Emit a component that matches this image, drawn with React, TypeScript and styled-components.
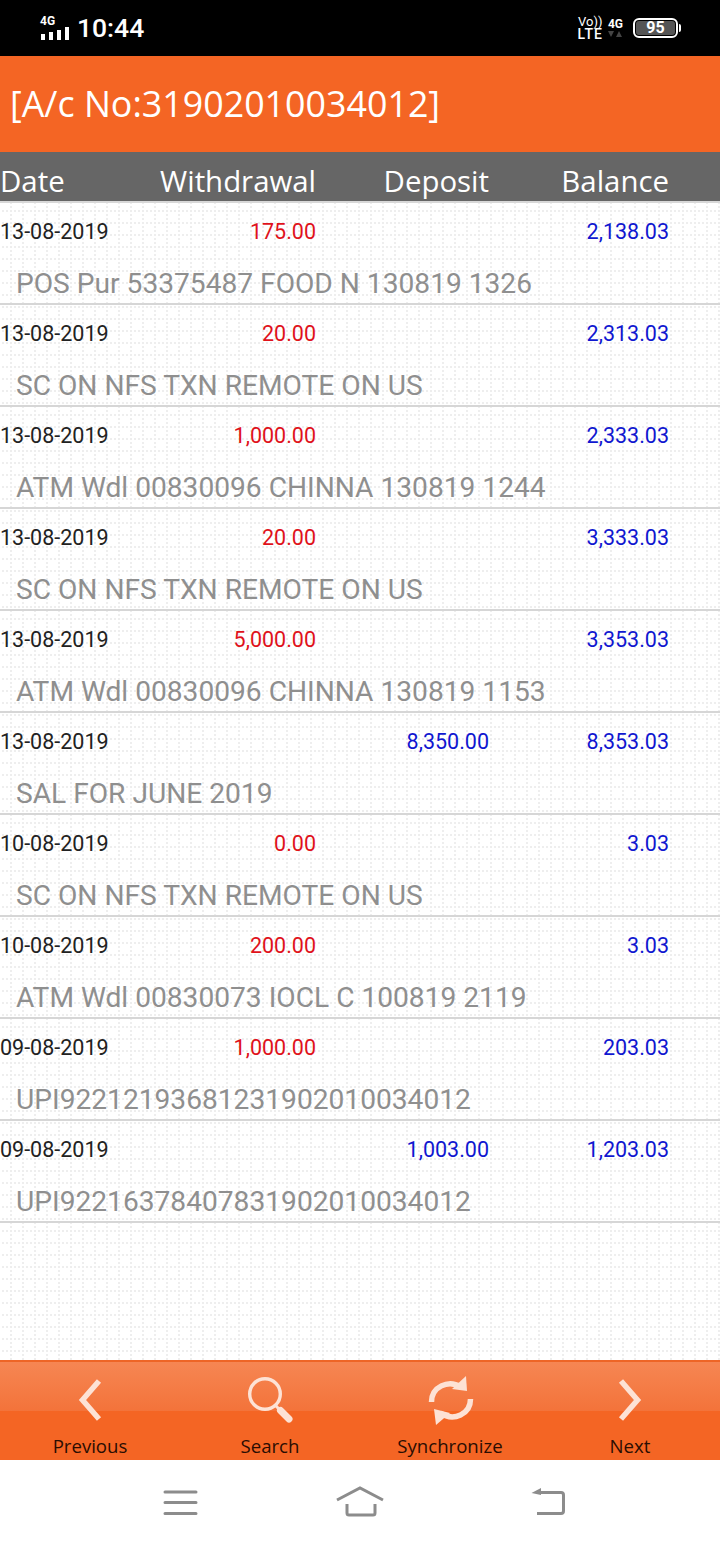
import React from "react";
import styled, { createGlobalStyle } from "styled-components";

const Global = createGlobalStyle`
  html, body { margin: 0; padding: 0; background: #fff; }
  * { box-sizing: border-box; }
`;
const Page = styled.div`
  width: 720px; height: 1544px; display: flex; flex-direction: column; overflow: hidden;
  font-family: Roboto, "Liberation Sans", sans-serif;
`;
const StatusBar = styled.div`
  height: 56px; background: #000; color: #fff; display: flex; justify-content: space-between;
  padding: 0 42px 0 40px; align-items: center; flex: none;
`;
const StatusLeft = styled.div`display: flex; align-items: center; gap: 7px;`;
const Time = styled.span`font-size: 26.5px; font-weight: 500; line-height: 1;`;
const SignalWrap = styled.div`display: flex; flex-direction: column; align-items: flex-start;`;
const TinyLabel = styled.span`font-size: 12px; font-weight: 700; line-height: 11px;`;
const StatusRight = styled.div`display: flex; align-items: center; gap: 5px;`;
const Stack = styled.div`display: flex; flex-direction: column; align-items: center;`;
const VoText = styled.span`font-size: 13px; line-height: 12px;`;
const LteText = styled.span`font-size: 14px; font-weight: 500; line-height: 13px; letter-spacing: 1px;`;
const Battery = styled.div`
  width: 45px; height: 20px; border: 2px solid #fff; border-radius: 6px; padding: 1px;
  display: flex; position: relative; margin-left: 5px;
  &::after { content: ""; position: absolute; right: -5px; top: 4px; width: 2px; height: 8px; background: #fff; border-radius: 0 2px 2px 0; }
`;
const BatteryFill = styled.div`
  flex: 1; background: #555; border-radius: 3px; color: #fff; font-size: 16px; font-weight: 700;
  line-height: 14px; text-align: center;
`;
const TitleBar = styled.div`
  height: 96px; background: #f46524; color: #fff; flex: none; display: flex; align-items: center;
  padding: 0 10px 2px; font-family: "Open Sans", sans-serif; font-size: 35.8px;
`;
const Grid = styled.div`
  display: grid; grid-template-columns: 120px 196px 173px 180px;
`;
const HeadRow = styled(Grid)`
  height: 51px; flex: none; background: #666; color: #fff; border-bottom: 2px solid #d8d8d8;
  font-family: "Open Sans", sans-serif; font-size: 29.4px; align-items: center; padding-top: 8px;
`;
const HeadCell = styled.div<{ $right?: boolean }>`
  text-align: ${(p) => (p.$right ? "right" : "left")}; line-height: 40px; white-space: nowrap;
`;
const Body = styled.div`
  flex: 1; background-color: #fff;
  background-image: url("data:image/svg+xml,%3Csvg xmlns='http://www.w3.org/2000/svg' width='12' height='12'%3E%3Cpath fill='%23eeeeee' d='M2 7h2v2H2zM6 7h2v2H6zM10 7h2v2h-2zM10 11h2v1h-2zM10 0h2v1h-2zM10 3h2v2h-2z'/%3E%3C/svg%3E");
  background-size: 12px 12px;
`;
const Row = styled.div`
  height: 102px; border-bottom: 2px solid #d6d6d6; display: flex; flex-direction: column;
`;
const Amounts = styled(Grid)`height: 55px; align-items: center; font-size: 21.5px; padding-top: 2px;`;
const DateCell = styled.div`color: #222; white-space: nowrap;`;
const Amount = styled.div<{ $color: string }>`color: ${(p) => p.$color}; text-align: right; white-space: nowrap;`;
const Narration = styled.div`
  padding: 8px 0 0 16px; color: #8f8f8f; font-size: 28.15px; line-height: 35px; white-space: nowrap;
`;
const Toolbar = styled.div`
  height: 100px; flex: none; position: relative; display: grid; grid-template-columns: repeat(4, 180px);
  background: #f46524; border-top: 2px solid #ee6526;
  &::before {
    content: ""; position: absolute; left: 0; right: 0; top: 0; height: 49px;
    background: linear-gradient(#f68653, #f3733a);
  }
`;
const ToolItem = styled.div`
  position: relative; display: flex; flex-direction: column; align-items: center; color: #2a0d02;
  font-family: "Open Sans", sans-serif; font-size: 18.6px; padding-top: 12px;
`;
const ToolIcon = styled.svg`width: 52px; height: 52px; fill: none; stroke: #fde2d5; display: block; overflow: visible;`;
const ToolLabel = styled.span`line-height: 22px; margin-top: 9px;`;
const NavBar = styled.div`
  height: 84px; flex: none; background: #fff; display: grid; grid-template-columns: repeat(3, 180px); justify-content: center;
  align-items: center;
`;
const NavIcon = styled.svg`width: 50px; height: 40px; fill: none; stroke: #8c8c8c; stroke-width: 3; margin: 0 auto; display: block; overflow: visible;`;

const rows = [
  ["13-08-2019", "175.00", "", "2,138.03", "POS Pur 53375487 FOOD N 130819 1326"],
  ["13-08-2019", "20.00", "", "2,313.03", "SC ON NFS TXN REMOTE ON US"],
  ["13-08-2019", "1,000.00", "", "2,333.03", "ATM Wdl 00830096 CHINNA 130819 1244"],
  ["13-08-2019", "20.00", "", "3,333.03", "SC ON NFS TXN REMOTE ON US"],
  ["13-08-2019", "5,000.00", "", "3,353.03", "ATM Wdl 00830096 CHINNA 130819 1153"],
  ["13-08-2019", "", "8,350.00", "8,353.03", "SAL FOR JUNE 2019"],
  ["10-08-2019", "0.00", "", "3.03", "SC ON NFS TXN REMOTE ON US"],
  ["10-08-2019", "200.00", "", "3.03", "ATM Wdl 00830073 IOCL C 100819 2119"],
  ["09-08-2019", "1,000.00", "", "203.03", "UPI92212193681231902010034012"],
  ["09-08-2019", "", "1,003.00", "1,203.03", "UPI92216378407831902010034012"],
];

export default function App() {
  return (
    <Page>
      <Global />
      <StatusBar>
        <StatusLeft>
          <SignalWrap>
            <TinyLabel>4G</TinyLabel>
            <svg width="30" height="13" viewBox="0 0 30 13" fill="#fff">
              <rect x="1" y="7" width="4" height="6" />
              <rect x="9" y="5" width="4" height="8" />
              <rect x="17" y="3" width="4" height="10" />
              <rect x="25" y="0" width="4" height="13" />
            </svg>
          </SignalWrap>
          <Time>10:44</Time>
        </StatusLeft>
        <StatusRight>
          <Stack>
            <VoText>Vo))</VoText>
            <LteText>LTE</LteText>
          </Stack>
          <Stack>
            <TinyLabel>4G</TinyLabel>
            <svg width="14" height="8" viewBox="0 0 14 8" fill="#444">
              <path d="M0 1h6L3 7zM8 7h6L11 1z" />
            </svg>
          </Stack>
          <Battery>
            <BatteryFill>95</BatteryFill>
          </Battery>
        </StatusRight>
      </StatusBar>
      <TitleBar>[A/c No:31902010034012]</TitleBar>
      <HeadRow>
        <HeadCell>Date</HeadCell>
        <HeadCell $right>Withdrawal</HeadCell>
        <HeadCell $right>Deposit</HeadCell>
        <HeadCell $right>Balance</HeadCell>
      </HeadRow>
      <Body>
        {rows.map((r, i) => (
          <Row key={i}>
            <Amounts>
              <DateCell>{r[0]}</DateCell>
              <Amount $color="#e0121b">{r[1]}</Amount>
              <Amount $color="#1017d0">{r[2]}</Amount>
              <Amount $color="#1017d0">{r[3]}</Amount>
            </Amounts>
            <Narration>{r[4]}</Narration>
          </Row>
        ))}
      </Body>
      <Toolbar>
        <ToolItem>
          <ToolIcon viewBox="0 0 52 52"><path d="M35 7 L18.500 26 L35 45" strokeWidth="5.500" /></ToolIcon>
          <ToolLabel>Previous</ToolLabel>
        </ToolItem>
        <ToolItem>
          <ToolIcon viewBox="0 0 52 52">
            <circle cx="21" cy="20" r="15.300" strokeWidth="3.400" />
            <path d="M31 31 L37 37" strokeWidth="3" />
            <path d="M36.500 36.500 L45 45" strokeWidth="7" strokeLinecap="round" />
          </ToolIcon>
          <ToolLabel>Search</ToolLabel>
        </ToolItem>
        <ToolItem>
          <ToolIcon viewBox="0 0 52 52">
            <path d="M7.500 28 C7.500 13 24 5 37 13" strokeWidth="5.500" />
            <path d="M46.500 25 C46.500 40 30 48 16 39" strokeWidth="5.500" />
            <path d="M42 2 L43 17 L28 15 Z" fill="#fde2d5" stroke="none" />
            <path d="M12 51 L10 35 L26 39 Z" fill="#fde2d5" stroke="none" />
          </ToolIcon>
          <ToolLabel>Synchronize</ToolLabel>
        </ToolItem>
        <ToolItem>
          <ToolIcon viewBox="0 0 52 52"><path d="M17 7 L33.500 26 L17 45" strokeWidth="5.500" /></ToolIcon>
          <ToolLabel>Next</ToolLabel>
        </ToolItem>
      </Toolbar>
      <NavBar>
        <NavIcon viewBox="0 0 50 40"><path d="M10 10h31M10 20.500h31M10 31.500h31" strokeLinecap="round" /></NavIcon>
        <NavIcon viewBox="0 0 50 40"><path d="M2 18 L25 6 L48 18 M12 22 V31 Q12 33 14 33 H38 Q40 33 40 31 V22" /></NavIcon>
        <NavIcon viewBox="0 0 50 40"><path d="M22 10.500 H46 Q48.500 10.500 48.500 13 V29 Q48.500 31.500 46 31.500 H22" /><path d="M16.500 11 L26 6 V13 Z" fill="#8c8c8c" stroke="none" /></NavIcon>
      </NavBar>
    </Page>
  );
}
